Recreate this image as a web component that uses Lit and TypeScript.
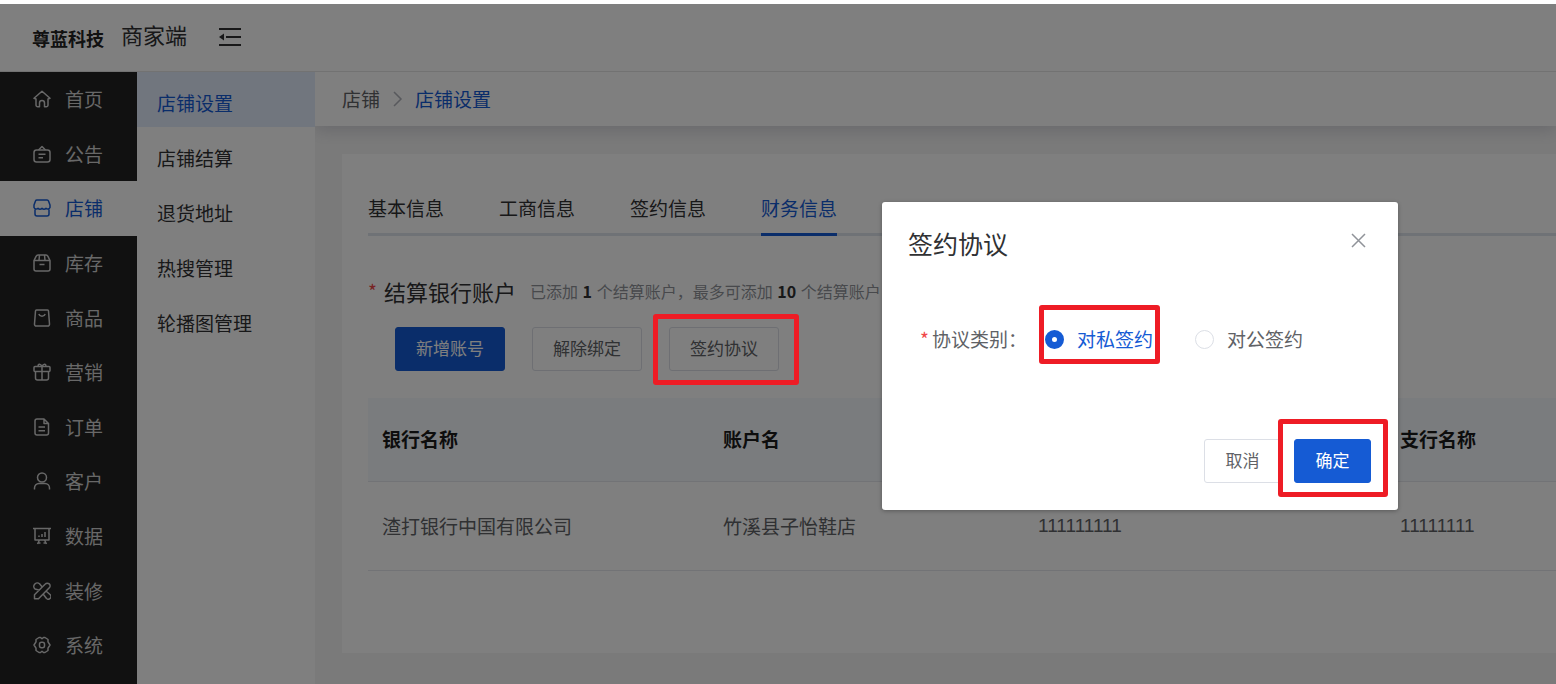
import { LitElement, html, css, svg } from "lit";
import { customElement, state } from "lit/decorators.js";
import { classMap } from "lit/directives/class-map.js";

const MENU = [
  { id: "home", name: "首页", icon: svg`<path d="M1 8.300 9 1.200l8 7.100-2 .7v6a1.800 1.800 0 0 1-1.800 1.800h-1.700V13a2.500 2.500 0 0 0-5 0v3.800H4.800A1.800 1.800 0 0 1 3 15V9z"/>` },
  { id: "notice", name: "公告", icon: svg`<rect x="1" y="5" width="16" height="12" rx="2.500"/><path d="M5.500 5 9 1.500 12.500 5M5.500 9.200h7M5.500 12.700h4.500"/>` },
  { id: "shop", name: "店铺", icon: svg`<path d="M4 1h10a1.500 1.500 0 0 1 1.500 1L17 6v2.500a2.400 2.400 0 0 1-4 .8 2.600 2.600 0 0 1-4 0 2.600 2.600 0 0 1-4 0 2.400 2.400 0 0 1-4-.8V6l1.500-4A1.500 1.500 0 0 1 4 1zM2 10.500V15a2 2 0 0 0 2 2h10a2 2 0 0 0 2-2v-4.500"/>` },
  { id: "stock", name: "库存", icon: svg`<path d="M1 6.500 3.200 2.200A2 2 0 0 1 5 1h8a2 2 0 0 1 1.800 1.200L17 6.500V15a2 2 0 0 1-2 2H3a2 2 0 0 1-2-2zM1 6.500h16M6.500 1 6 6.500M11.500 1l.5 5.500M6.500 10.500h5"/>` },
  { id: "goods", name: "商品", icon: svg`<path d="M3.500 1h11a1 1 0 0 1 1 1l1 13a1.800 1.800 0 0 1-1.800 2H3.300a1.800 1.800 0 0 1-1.800-2l1-13a1 1 0 0 1 1-1zM5.800 5a3.400 3.400 0 0 0 6.400 0"/>` },
  { id: "sale", name: "营销", icon: svg`<rect x="1" y="3.500" width="16" height="5" rx="1"/><path d="M2.500 8.500V15a2 2 0 0 0 2 2h9a2 2 0 0 0 2-2V8.500M9 3.500V17M5.500 3.500c-1.500-2.500 2-3.500 3.500 0 1.500-3.500 5-2.500 3.500 0"/>` },
  { id: "order", name: "订单", icon: svg`<path d="M4 1h7l4.500 4.500V15a2 2 0 0 1-2 2H4a2 2 0 0 1-2-2V3a2 2 0 0 1 2-2zM11 1v4.500h4.500M5.500 9h6.500M5.500 12.700h6.500"/>` },
  { id: "customer", name: "客户", icon: svg`<circle cx="9" cy="5.500" r="4.500"/><path d="M1.500 17.500V16a4.500 4.500 0 0 1 4.500-4.500h6a4.500 4.500 0 0 1 4.500 4.500v1.500"/>` },
  { id: "data", name: "数据", icon: svg`<path d="M0 1.500h18M2 1.500v11.500h14V1.500M6.500 13l-2 4M11.500 13l2 4M4.500 16h3M10.500 16h3M6 10V8.500M9 10V7M12 10V5"/>` },
  { id: "decor", name: "装修", icon: svg`<path d="M1.500 16.800v-4L12.300 2a2.700 2.700 0 0 1 4 3.800L5.500 16.800zM6.500 8.200 2 7a3 3 0 0 1 4.500-5.200L8.800 4.500M10.500 12.500l3 4a2.500 2.500 0 0 0 3.500-4l-3.500-3"/>` },
  { id: "system", name: "系统", icon: svg`<path d="M6 1.500h1.500L9 2.800l1.500-1.300H12l3 2v2.300L17 9l-2 3.200v2.300l-3 2h-1.500L9 15.200l-1.500 1.300H6l-3-2v-2.300L1 9l2-3.200V3.500z"/><rect x="6.500" y="6.200" width="5" height="5.600" rx="2"/>` },
];
const SUBMENU = ["店铺设置", "店铺结算", "退货地址", "热搜管理", "轮播图管理"];
const TABS = ["基本信息", "工商信息", "签约信息", "财务信息"];
const COLUMNS = ["银行名称", "账户名", "银行账号", "支行名称"];
const ROWS = [["渣打银行中国有限公司", "竹溪县子怡鞋店", "111111111", "11111111"]];

@customElement("app-root")
export class AppRoot extends LitElement {
  @state() private agreement = "private";

  static styles = css`
    :host {
      display: flex;
      flex-direction: column;
      position: relative;
      min-height: 100vh;
      box-sizing: border-box;
      padding-top: 4px;
      overflow: hidden;
      background: #fff;
      color: #303133;
      font: 19px/28px "Noto Sans CJK SC", sans-serif;
    }
    *, *::before, *::after { box-sizing: border-box; }
    a { color: inherit; text-decoration: none; }
    button { font: inherit; cursor: pointer; }
    svg { display: block; fill: none; stroke: currentColor; }

    .top {
      display: flex;
      align-items: center;
      position: relative;
      height: 68px;
      padding: 0 32px 4px;
      border-bottom: 1px solid #e4e4e4;
      background: #fff;
    }
    .brand { font-size: 18px; font-weight: 700; color: #222; padding-top: 4px; }
    .portal { font-size: 22px; margin-left: 17px; padding-bottom: 3px; }
    .fold { border: 0; padding: 3px 0 0; background: none; color: #303133; margin-left: 32px; }

    .body { display: flex; flex: 1; }
    .menu {
      flex: 0 0 137px;
      display: grid;
      grid-auto-rows: minmax(48px, 1fr);
      padding-bottom: 12px;
      background: #222;
      color: #d0d0d0;
    }
    .menu a { display: flex; align-items: center; gap: 14px; height: 100%; padding-left: 33px; }
    .menu .active { background: #fff; color: #155bd4; }

    .submenu {
      flex: 0 0 178px;
      position: relative;
      background: #fff;
    }
    .submenu a { display: block; height: 55px; padding: 17px 0 0 20px; }
    .submenu .active { background: #e3ecfd; color: #155bd4; }

    .main { flex: 1; min-width: 0; background: #f5f5f5; }
    .crumbs {
      display: flex;
      align-items: center;
      gap: 12px;
      height: 54px;
      padding-left: 27px;
      background: #fff;
      color: #606266;
      box-shadow: 0 4px 16px rgba(60, 60, 90, 0.2);
    }
    .crumbs svg { color: #b0b3ba; }
    .crumbs .current { color: #155bd4; }

    .card { margin: 28px 0 32px 27px; padding: 27px 0 82px 26px; background: #fff; }
    .tabs { display: flex; gap: 55px; border-bottom: 3px solid #dfe4ed; }
    .tab {
      height: 55px;
      margin-bottom: -3px;
      padding: 2px 0 0;
      border: 0;
      border-bottom: 3px solid transparent;
      background: none;
      color: #303133;
    }
    .tab.active { color: #155bd4; border-color: #155bd4; }

    .heading { display: flex; align-items: center; height: 32px; margin-top: 39px; white-space: nowrap; }
    .star { color: #f04848; width: 16px; }
    .heading h2 { margin: 0; font-size: 22px; font-weight: 400; }
    .hint { margin-left: 14px; font-size: 16px; color: #909399; }
    .hint b { margin: 0 1px; color: #303133; }

    .actions { display: flex; gap: 27px; padding: 20px 0 27px 27px; }
    .btn {
      height: 44px;
      width: 110px;
      padding: 0 0 2px;
      border: 1px solid #dcdfe6;
      border-radius: 3px;
      background: #fff;
      color: #606266;
      font-size: 17px;
    }
    .btn.primary { background: #155bd4; border-color: #155bd4; color: #fff; }

    .mark { position: relative; display: flex; }
    .mark::after {
      content: "";
      position: absolute;
      z-index: 20;
      inset: -13px -20px -14px -16px;
      border: 5px solid #ee1c25;
      border-radius: 3px;
      pointer-events: none;
    }
    .mark.choice::after { inset: -20px -7px -11px -6px; }
    .mark.confirm::after { inset: -20px -17px -14px -16px; }

    table { width: 1320px; border-collapse: collapse; table-layout: fixed; text-align: left; }
    th, td { padding: 0 14px; border-bottom: 1px solid #e4e7ed; }
    th { height: 83px; background: #f5f8fc; color: #1a1a1a; font-weight: 700; }
    td { height: 89px; color: #606266; }
    td.number { font-family: "Liberation Sans", sans-serif; }
    .c0 { width: 341px; }
    .c1 { width: 315px; }
    .c2 { width: 362px; }

    .mask { position: absolute; inset: 4px 0 0; z-index: 10; background: rgba(0, 0, 0, 0.5); }
    .dialog {
      position: absolute;
      z-index: 15;
      top: 202px;
      right: 158px;
      width: 516px;
      padding: 24px 27px 27px 26px;
      border-radius: 3px;
      background: #fff;
      box-shadow: 0 1px 4px rgba(0, 0, 0, 0.3);
    }
    .dialog-head { display: flex; justify-content: space-between; align-items: flex-start; height: 36px; }
    .dialog-head h1 { margin: 0; font-size: 25px; line-height: 34px; font-weight: 400; }
    .close { border: 0; padding: 7px 5px; background: none; color: #909399; }
    .field {
      display: flex;
      align-items: center;
      margin: 63px 0 86px;
      padding-left: 12px;
      color: #606266;
    }
    .field .star { width: 12px; }
    .field .name { width: 113px; }
    .radio { display: flex; align-items: center; gap: 13px; height: 28px; }
    .radio input {
      appearance: none;
      width: 19px;
      height: 19px;
      margin: 0;
      border: 1px solid #dcdfe6;
      border-radius: 50%;
      background: #fff;
    }
    .radio input:checked { border: 7px solid #155bd4; }
    .radio.on { color: #155bd4; }
    .choices { display: flex; gap: 42px; }
    .dialog-foot { display: flex; justify-content: flex-end; gap: 13px; }
    .dialog .btn { width: 77px; }
  `;

  private radio(value: string, label: string) {
    const on = this.agreement === value;
    return html`<label class=${classMap({ radio: true, on })}>
      <input type="radio" name="agreement" .value=${value} .checked=${on} @change=${() => (this.agreement = value)} />${label}</label>`;
  }

  render() {
    return html`
      <header class="top">
        <span class="brand">尊蓝科技</span>
        <span class="portal">商家端</span>
        <button class="fold" aria-label="收起菜单">
          <svg width="22" height="20" viewBox="0 0 22 20" stroke-width="2">
            <path d="M0 2h22M7 10h15M0 18h22" /><path d="M0 10l5-3.500v7z" fill="currentColor" stroke="none" />
          </svg>
        </button>
      </header>
      <div class="body">
        <nav class="menu">
          ${MENU.map((m) => html`<a href="#${m.id}" class=${classMap({ active: m.id === "shop" })}>
            <svg width="18" height="18" viewBox="0 0 18 18" stroke-width="1.5" stroke-linejoin="round">${m.icon}</svg>${m.name}</a>`)}
        </nav>
        <nav class="submenu">
          ${SUBMENU.map((s, i) => html`<a href="#" class=${classMap({ active: i === 0 })}>${s}</a>`)}
        </nav>
        <main class="main">
          <nav class="crumbs">
            <a href="#">店铺</a>
            <svg width="11" height="16" viewBox="0 0 11 16" stroke-width="1.5"><path d="M2 1l7 7-7 7" /></svg>
            <a href="#" class="current">店铺设置</a>
          </nav>
          <section class="card">
            <div class="tabs" role="tablist">
              ${TABS.map((t, i) => html`<button role="tab" class=${classMap({ tab: true, active: i === 3 })}>${t}</button>`)}
            </div>
            <div class="heading">
              <span class="star">*</span>
              <h2>结算银行账户</h2>
              <span class="hint">已添加 <b>1</b> 个结算账户，最多可添加 <b>10</b> 个结算账户</span>
            </div>
            <div class="actions">
              <button class="btn primary">新增账号</button>
              <button class="btn">解除绑定</button>
              <span class="mark"><button class="btn">签约协议</button></span>
            </div>
            <table>
              <thead><tr>${COLUMNS.map((c, i) => html`<th class="c${i}">${c}</th>`)}</tr></thead>
              <tbody>${ROWS.map((r) => html`<tr>${r.map((c) => html`<td class=${classMap({ number: /^\d+$/.test(c) })}>${c}</td>`)}</tr>`)}</tbody>
            </table>
          </section>
        </main>
      </div>
      <div class="mask"></div>
      <div class="dialog" role="dialog" aria-modal="true" aria-labelledby="dialog-title">
        <div class="dialog-head">
          <h1 id="dialog-title">签约协议</h1>
          <button class="close" aria-label="关闭">
            <svg width="15" height="15" viewBox="0 0 15 15" stroke-width="1.5"><path d="M1 1l13 13M14 1L1 14" /></svg>
          </button>
        </div>
        <div class="field" role="radiogroup" aria-labelledby="field-name">
          <span class="star">*</span>
          <span class="name" id="field-name">协议类别：</span>
          <div class="choices">
            <span class="mark choice">${this.radio("private", "对私签约")}</span>
            ${this.radio("public", "对公签约")}
          </div>
        </div>
        <div class="dialog-foot">
          <button class="btn">取消</button>
          <span class="mark confirm"><button class="btn primary">确定</button></span>
        </div>
      </div>
    `;
  }
}
